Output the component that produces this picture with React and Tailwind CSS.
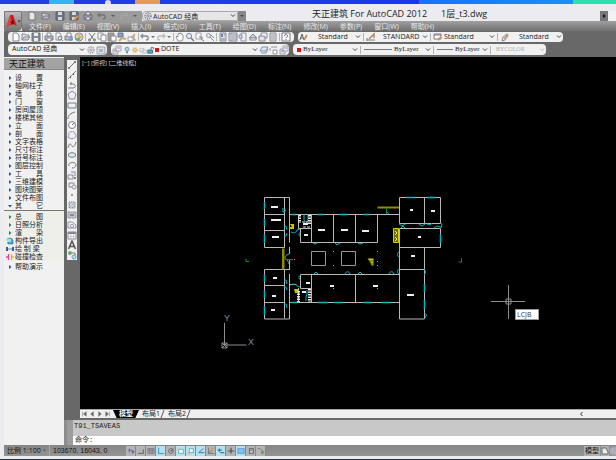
import { useState } from 'react'
import clsx from 'clsx'

const glyphs = {
  new: <path d="M2 1h4l2 2v6H2z" fill="#fff" stroke="#667" />,
  open: <><path d="M1 8V2h3l1 1h3v2" fill="#dde" stroke="#667" /><path d="M1 8l2-3h6L7 8z" fill="#bcc8d4" stroke="#667" /></>,
  save: <><path d="M1 1h8v8H1z" fill="#5b6a80" stroke="#445" /><path d="M3 1h4v3H3zM3 6h4v3H3z" fill="#e8edf2" /></>,
  saveas: <><path d="M1 1h8v8H1z" fill="#5b6a80" stroke="#445" /><path d="M3 1h4v3H3zM3 6h4v3H3z" fill="#e8edf2" /><path d="M5 9l4-4" stroke="#e8902c" strokeWidth="2" /></>,
  print: <><path d="M3 4V1h4v3" fill="#fff" stroke="#667" /><path d="M1 4h8v4H1z" fill="#aab" stroke="#556" /><path d="M3 6h4v3H3z" fill="#fff" stroke="#667" /></>,
  preview: <><path d="M2 1h4l1 2v5H2z" fill="#fff" stroke="#778" /><circle cx="6" cy="6" r="2" fill="#cfe0f0" stroke="#556" /><path d="M7 7l2 2" stroke="#556" /></>,
  plot: <><path d="M1 4h7v4H1z" fill="#aab" stroke="#556" /><path d="M3 4V1h4v3" fill="#fff" stroke="#667" /><circle cx="7" cy="7" r="2" fill="#4a86c8" /></>,
  globe: <><circle cx="5" cy="5" r="4" fill="#a9cfe6" stroke="#668" /><path d="M5 1v4h4" fill="none" stroke="#d9a52c" strokeWidth="2" /><path d="M2 7h4" stroke="#4a9a4a" strokeWidth="2" /></>,
  cut: <><path d="M2 1l5 7M8 1L3 8" stroke="#556" fill="none" /><circle cx="2.5" cy="8" r="1" fill="#fff" stroke="#335" /><circle cx="7.5" cy="8" r="1" fill="#fff" stroke="#335" /></>,
  copy: <><path d="M1 1h5v6H1z" fill="#fff" stroke="#778" /><path d="M4 3h5v6H4z" fill="#fff" stroke="#667" /></>,
  paste: <><path d="M1 1h6v8H1z" fill="#8d8268" stroke="#667" /><path d="M4 4h5v5H4z" fill="#fff" stroke="#667" /></>,
  match: <><path d="M1 1h5v4H1z" fill="#5c8fd0" stroke="#446" /><path d="M2 9l3-3 4 1" stroke="#d58b30" strokeWidth="2" fill="none" /></>,
  block: <><path d="M1 5h5v4H1z" fill="#fff" stroke="#778" /><path d="M4 6l4-4" stroke="#d58b30" strokeWidth="1.5" /><path d="M7 3v5h2" fill="none" stroke="#778" /></>,
  undo: <path d="M3 2L1 4l2 2M1 4h5c3 0 3 4 0 4" fill="none" stroke="#667" strokeWidth="1.3" />,
  redo: <path d="M7 2l2 2-2 2M9 4H4c-3 0-3 4 0 4" fill="none" stroke="#a5a8ac" strokeWidth="1.3" />,
  dot: <path d="M3 4h4L5 6z" fill="#444" />,
  hand: <path d="M3 9L1 5l1-1 1 1V2l1-1 1 1V1h1v1l1 0 1 1v4L7 9z" fill="#fff" stroke="#667" strokeWidth=".9" />,
  zoom: <><circle cx="4" cy="4" r="2.6" fill="#dbe8f4" stroke="#667" /><path d="M6 6l3 3" stroke="#556" strokeWidth="1.5" /></>,
  zoomwin: <><path d="M1 1h5v6H1z" fill="#fff" stroke="#889" /><path d="M4 5h3v2M6 7l3 2" stroke="#556" fill="none" /></>,
  zoomprev: <><circle cx="3.5" cy="3.5" r="2" fill="#dbe8f4" stroke="#778" /><path d="M5 5l4 4M6 3l3 3" stroke="#667" /></>,
  props: <><path d="M2 1h6v8H2z" fill="#d2dcea" stroke="#667" /><path d="M3 2h2v3H3z" fill="#3262a8" /><path d="M6 3h1M3 7h4" stroke="#556" /></>,
  design: <><path d="M1 1h8v8H1z" fill="#dde" stroke="#667" /><path d="M3 1v8M4 3h5M4 5h5M4 7h5" stroke="#667" strokeWidth=".8" /></>,
  palette: <><path d="M3 1h5v8H3z" fill="#eef" stroke="#778" /><path d="M1 3h3v3H1z" fill="#d6e2f0" stroke="#557" strokeWidth=".8" /></>,
  sheet: <><path d="M1 6l4-4 4 4z" fill="#bcc9d8" stroke="#667" /><path d="M2 6h6v2H2z" fill="#fff" stroke="#667" /></>,
  markup: <><path d="M3 1h6v5H3z" fill="#fff" stroke="#667" /><path d="M1 4h6v5H1z" fill="#d4dde8" stroke="#667" /></>,
  calc: <><path d="M2 1h6v8H2z" fill="#eee" stroke="#667" /><path d="M3 3h4M3 5h4M3 7h4" stroke="#667" strokeWidth=".9" /></>,
  help: <><path d="M1 1h8v8H1z" fill="#fff" stroke="#556" /><path d="M3.5 4c0-2 3-2 3 0 0 1-1.500 1-1.500 2M5 7v1" fill="none" stroke="#335" /></>,
  textstyle: <><path d="M1 8l2-6 2 6M2 6h2" stroke="#333" fill="none" /><path d="M5 8l3-5" stroke="#b5651d" strokeWidth="1.7" /></>,
  dimstyle: <><path d="M1 8h8M1 6v3" stroke="#555" /><path d="M3 7l5-5v4" stroke="#a9582a" strokeWidth="1.4" fill="none" /></>,
  tablestyle: <><path d="M1 2h7v5H1z" fill="#fff" stroke="#556" /><path d="M1 3h7" stroke="#556" /><path d="M5 8l3-3" stroke="#c27a2a" strokeWidth="2" /></>,
  leader: <><path d="M2 9l1-4 4-3 1 2-3 4z" fill="#eee" stroke="#667" /><path d="M4 7l4-5" stroke="#c27a2a" strokeWidth="1.4" /></>,
  gear: <><circle cx="5" cy="5" r="3" fill="#fff" stroke="#778" strokeWidth="1.4" strokeDasharray="1.4 .8" /><circle cx="5" cy="5" r="1.2" fill="none" stroke="#778" /></>,
  workspace: <><path d="M1 2h8v7H1z" fill="#d4dbe3" stroke="#889" /><path d="M3 4h4v3H3z" fill="#8fa3b8" /></>,
  layers: <><path d="M1 4h5v5H1z" fill="#ddd" stroke="#889" /><path d="M4 1h5v5H4z" fill="#eef" stroke="#889" /><path d="M2 6h3M5 3h3" stroke="#778" /></>,
  bulb: <><circle cx="5" cy="4" r="2.500" fill="#b4d4ee" stroke="#68a" /><path d="M4 8h2" stroke="#666" strokeWidth="2" /></>,
  sun: <><circle cx="5" cy="5" r="3.400" fill="none" stroke="#d9a52c" strokeDasharray="1 1.200" /><circle cx="5" cy="5" r="2" fill="#f4dc8a" stroke="#b98a22" strokeWidth=".7" /></>,
  freeze: <><path d="M1 3h5v4H1zM4 5h5v4H4z" fill="#eee" stroke="#bbb" /></>,
  lock: <><path d="M5 5V2h3v2" fill="none" stroke="#367" /><path d="M1 5h6v4H1z" fill="#5aa7cf" stroke="#367" /></>,
  layerprev: <><path d="M3 2h6L7 6H1z" fill="#d3e4f2" stroke="#579" /><path d="M2 8h5l2-4" fill="none" stroke="#579" /></>,
  layeriso: <><path d="M2 2h6M4 5h4v4H4z" fill="#fff" stroke="#778" /><path d="M1 3v3" stroke="#778" /></>,
  line: <><path d="M2 8l6-6" stroke="#444" /><path d="M1 8h2M7 2h2" stroke="#333" strokeWidth="1.5" /></>,
  xline: <><path d="M1 9l8-8" stroke="#666" /><path d="M3 7h1M6 4h1" stroke="#222" strokeWidth="2" /></>,
  pline: <path d="M1 8h5c3 0 3-4 0-4H3M4 2v3" stroke="#555" fill="none" />,
  polygon: <path d="M5 1l4 3-1.500 5h-5L1 4z" fill="#e8f0f6" stroke="#667" />,
  rect: <path d="M1 3h8v5H1z" fill="#e8f0f6" stroke="#556" />,
  arc: <path d="M1 9c0-4 3-6 7-7" fill="none" stroke="#444" />,
  circle: <><circle cx="5" cy="5" r="3.500" fill="#fff" stroke="#556" /><path d="M5 5l2-2" stroke="#444" /></>,
  cloud: <path d="M2 8c-2-2 0-3 0-3-1-2 1-4 2-3 2-1 4 0 4 2 2 1 1 4-1 4-2 1-3 1-5 0z" fill="#eef" stroke="#667" strokeDasharray="2 .5" />,
  spline: <path d="M1 8c1-6 3-4 4-2s3 0 4-4" fill="none" stroke="#555" />,
  ellipse: <ellipse cx="5" cy="5" rx="3.800" ry="2.300" fill="#dce8f0" stroke="#556" />,
  earc: <path d="M2 6C0 2 9 1 9 5c0 2-2 3-4 3" fill="none" stroke="#556" />,
  insert: <><path d="M1 5h5v4H1zM4 2h4v4" fill="#eef" stroke="#667" /><circle cx="8" cy="8" r="1" fill="#333" /></>,
  makeblock: <><path d="M2 3h5v4H2z" fill="#eef" stroke="#667" /><circle cx="7" cy="7" r="2" fill="#eee" stroke="#778" /></>,
  point: <path d="M4.500 4.500h1v1h-1z" fill="#333" stroke="#333" strokeWidth=".5" />,
  hatch: <path d="M2 2h6v6H2zM2 5l3-3M2 8l6-6M5 8l3-3" fill="#cdd5dc" stroke="#667" strokeWidth=".9" strokeDasharray="1.500 .5" />,
  gradient: <><path d="M1 2h8v6H1z" fill="#aebac6" stroke="#667" strokeDasharray="2 .7" /><path d="M3 4h4v2H3z" fill="#667" /></>,
  region: <><path d="M1 8V2h4l4 3v3z" fill="#eef" stroke="#778" /><circle cx="5" cy="6" r="1.600" fill="#fff" stroke="#778" /></>,
  table: <><path d="M1 2h8v7H1z" fill="#fff" stroke="#667" /><path d="M1 2h8v2H1z" fill="#667" /><path d="M4 4v5M6.500 4v5M1 6.500h8" stroke="#99a" strokeWidth=".6" /></>,
  text: <path d="M1.500 9L5 1l3.500 8M3 6.500h4" fill="none" stroke="#222" strokeWidth="1.500" />,
  addsel: <><circle cx="3" cy="3" r="2" fill="#3d9b46" /><path d="M5 3h3v3" fill="none" stroke="#555" /><circle cx="7" cy="7" r="2" fill="#aad8f2" stroke="#3f86b5" /></>,
  infer: <path d="M3 2v5M1 4h5M6 4l3 2-2 2z" fill="#3a78b5" stroke="#234f83" />,
  snap: <path d="M2 8h6V3M3 8h1" fill="none" stroke="#333" />,
  gridd: <path d="M1 2h8v6H1zM3 2v6M5 2v6M7 2v6M1 4h8" fill="#aaa" stroke="#556" strokeWidth=".7" />,
  ortho: <path d="M2 1v7h7" fill="none" stroke="#2582b3" strokeWidth="1.300" />,
  polar: <><circle cx="5" cy="5" r="3" fill="#bbb" stroke="#444" /><path d="M5 5l3-3M4 5h3" stroke="#333" /></>,
  osnap: <><path d="M2 3h6v5H2z" fill="#fff" stroke="#368bb5" /><path d="M1 2h2v2H1z" fill="#e69a45" /></>,
  osnap3d: <><path d="M3 2h5v5H3zM3 7L1 9" fill="#fff" stroke="#368bb5" /><path d="M1 7h2v2H1z" fill="#e69a45" /></>,
  otrack: <path d="M8 2L2 7h7" fill="none" stroke="#175b83" strokeWidth="1.200" />,
  ducs: <><path d="M2 1v7h7M2 8l4-4" fill="none" stroke="#555" /><path d="M6 4l2-3" stroke="#e8902c" strokeWidth="2" /></>,
  dyn: <path d="M3 2v4M1 4h5M4 7h5" stroke="#165a7c" strokeWidth="1.600" />,
  lwt: <path d="M5 1v7M1 5h8" stroke="#333" strokeWidth="1.500" />,
  tpy: <path d="M1 2h8v6H1z" fill="#72b7ec" stroke="#3380c1" />,
  qp: <><path d="M3 2h5v6H3z" fill="#ccc" stroke="#333" /><path d="M4 4h3" stroke="#333" /></>,
  sc: <><path d="M1 2h3l3 3" stroke="#555" fill="none" /><circle cx="7" cy="7" r="2.200" fill="#4fa53f" /></>,
  layout: <path d="M2 2h4l2 4v2H2z" fill="#fff" stroke="#555" />,
}

function Icon({ name, className = 'size-[10px]' }) {
  return (
    <svg viewBox="0 0 10 10" fill="none" aria-hidden="true" className={clsx('shrink-0', className)}>
      {glyphs[name]}
    </svg>
  )
}

function IconButton({ name, className }) {
  return (
    <button type="button" aria-label={name} className={clsx('flex shrink-0 items-center justify-center', className)}>
      <Icon name={name} className="size-[10px] opacity-75" />
    </button>
  )
}

function Sep() {
  return <span className="mx-px h-2 w-px shrink-0 bg-[#b4b4b4]" />
}

function Picker({ label, value, disabled, className, textClass }) {
  return (
    <span className={clsx('relative flex h-full shrink-0 items-center', className)}>
      <select
        aria-label={label}
        disabled={disabled}
        className={clsx('h-full w-full appearance-none bg-transparent outline-none', disabled ? 'text-[#aaa]' : 'text-[#222]', textClass)}
      >
        <option>{value}</option>
      </select>
      <svg viewBox="0 0 6 4" fill="none" className="pointer-events-none absolute right-px h-1 w-1.5" aria-hidden="true">
        <path d="M1 .5l2 2 2-2" stroke={disabled ? '#bbb' : '#444'} />
      </svg>
    </span>
  )
}

const menus = ['文件(F)', '编辑(E)', '视图(V)', '插入(I)', '格式(O)', '工具(T)', '绘图(D)', '标注(N)', '修改(M)', '参数(P)', '窗口(W)', '帮助(H)']

const standardTools = [
  ['new', 'open', 'save'],
  ['print', 'preview', 'plot', 'globe'],
  ['cut', 'copy', 'paste', 'match', 'block'],
  ['undo', 'dot', 'redo', 'dot'],
  ['hand', 'zoom', 'zoomwin', 'zoomprev'],
  ['props', 'design', 'palette', 'sheet', 'markup', 'calc'],
  ['help'],
]

const drawTools = ['line', 'xline', 'pline', 'polygon', 'rect', 'arc', 'circle', 'cloud', 'spline', 'ellipse', 'earc', 'insert', 'makeblock', 'point', 'hatch', 'gradient', 'region', 'table', 'text', 'addsel']

const sideItems = ['设　　置', '轴网柱子', '墙　　体', '门　　窗', '房间屋顶', '楼梯其他', '立　　面', '剖　　面', '文字表格', '尺寸标注', '符号标注', '图层控制', '工　　具', '三维建模', '图块图案', '文件布图']

const statusToggles = [
  ['infer', false], ['snap', false], ['gridd', false], ['ortho', true], ['polar', false], ['osnap', true], ['osnap3d', true],
  ['otrack', true], ['ducs', false], ['dyn', true], ['lwt', false], ['tpy', true], ['qp', false], ['sc', false],
]

function DesktopStrip() {
  return (
    <div className="flex h-1 shrink-0 bg-gradient-to-r from-[#2440e4] to-[#1034f0]">
      <span className="w-[8%]" />
      <span className="w-[4%] bg-[#35b4f4]" />
      <span className="w-[5%]" />
      <span className="w-[1%] rounded-t-full bg-[#e4d4ee]" />
      <span className="w-[4%]" />
      <span className="w-[4%] bg-[#e29a55]" />
      <span className="w-[42%]" />
      <span className="w-[25%] bg-gradient-to-r from-[#1672fa] to-[#1a90f8]" />
      <span className="flex-1 bg-[#2ce0b0]" />
    </div>
  )
}

function TitleBar() {
  return (
    <div className="flex h-[10px] items-center">
      <div className="flex h-full items-center gap-[2px] bg-[#9b9b9b] px-1">
        <IconButton name="new" className="w-3" />
        <IconButton name="open" className="w-3" />
        <IconButton name="save" className="w-3" />
        <IconButton name="saveas" className="w-3" />
        <IconButton name="print" className="w-3" />
        <IconButton name="undo" className="w-3" />
        <IconButton name="dot" className="w-1.5" />
        <IconButton name="redo" className="w-3" />
        <IconButton name="dot" className="w-1.5" />
      </div>
      <div className="flex h-full w-24 shrink-0 items-center rounded-l-sm border border-[#aaa] bg-[#e6e6e6]">
        <Icon name="gear" />
        <Picker label="工作空间" value="AutoCAD 经典" className="flex-1" textClass="text-[7px]" />
      </div>
      <button type="button" aria-label="自定义" className="flex h-full w-2 shrink-0 items-center justify-center bg-[#888]">
        <Icon name="dot" />
      </button>
      <h1 className="flex-1 self-start pl-[66px] text-[9px] leading-[6px] whitespace-pre text-[#222]">{'天正建筑 For AutoCAD 2012      1层_t3.dwg'}</h1>
      <div className="flex h-full w-4 shrink-0 items-center bg-[#777] text-[#222]">
        <svg viewBox="0 0 8 10" className="h-[10px] w-2" aria-hidden="true"><path d="M3 3l3 2-3 2z" fill="#111" /></svg>
        <input aria-label="搜索" className="h-[10px] min-w-0 flex-1 bg-[#f2f2f2]" />
      </div>
    </div>
  )
}

function Toolbars() {
  return (
    <div className="flex flex-col gap-0.5 bg-[#686868] pt-px pb-0.5 pl-1">
      <div className="flex h-[10px] gap-1">
        <div className="flex items-center rounded-sm bg-[#f1f1f1] px-[3px]">
          {standardTools.map((group, i) => (
            <div key={i} className="flex items-center">
              {i > 0 && <Sep />}
              {group.map((name, j) => (
                <IconButton key={j} name={name} className={name === 'dot' ? 'w-1.5' : 'w-[10px]'} />
              ))}
            </div>
          ))}
        </div>
        <div className="flex items-center rounded-sm bg-[#f1f1f1]">
          <IconButton name="textstyle" className="w-3" />
          <Picker label="文字样式" value="Standard" className="w-[52px]" textClass="pl-2 text-[7px]" />
          <Sep />
          <IconButton name="dimstyle" className="w-3" />
          <Picker label="标注样式" value="STANDARD" className="w-[52px]" textClass="pl-1.5 text-[7px]" />
          <Sep />
          <IconButton name="tablestyle" className="w-3" />
          <Picker label="表格样式" value="Standard" className="w-[52px]" textClass="text-[7px]" />
          <Sep />
          <IconButton name="leader" className="w-3" />
          <Picker label="多重引线样式" value="Standard" className="w-[52px]" textClass="pl-2 text-[7px]" />
        </div>
      </div>
      <div className="flex h-[11px] gap-1">
        <div className="flex w-[99px] items-center rounded-sm bg-[#f1f1f1]">
          <Picker label="当前工作空间" value="AutoCAD 经典" className="w-[78px]" textClass="pl-1 text-[7px]" />
          <IconButton name="gear" />
          <IconButton name="workspace" />
        </div>
        <div className="flex w-[178px] items-center rounded-sm bg-[#f1f1f1]">
          <IconButton name="layers" className="w-3" />
          <Icon name="bulb" className="size-2" />
          <Icon name="sun" className="size-2" />
          <Icon name="freeze" className="size-2" />
          <Icon name="lock" className="size-2" />
          <span className="size-1 bg-[#d81414]" />
          <Picker label="图层" value="DOTE" className="flex-1" textClass="pl-0.5 text-[7px]" />
          <IconButton name="layerprev" />
          <IconButton name="layeriso" />
          <IconButton name="layers" />
        </div>
        <div className="flex items-center rounded-sm bg-[#f1f1f1] pl-1 font-['Liberation_Serif','Noto_Sans_CJK_SC',serif]">
          <span className="size-1 bg-[#d81414]" />
          <Picker label="颜色" value="ByLayer" className="w-[58px]" textClass="pl-0.5 text-[7px]" />
          <Sep />
          <span className="ml-0.5 h-px w-7 bg-[#777]" />
          <Picker label="线型" value="ByLayer" className="w-10" textClass="pl-0.5 text-[7px]" />
          <Sep />
          <span className="ml-0.5 h-px w-4 bg-[#777]" />
          <Picker label="线宽" value="ByLayer" className="w-9" textClass="pl-0.5 text-[7px]" />
          <Sep />
          <Picker label="打印样式" value="BYCOLOR" disabled className="w-[54px]" textClass="pl-1 text-[6px]" />
        </div>
      </div>
    </div>
  )
}

function SideRow({ children, icon, color = 'text-[#1c5a96]' }) {
  return (
    <li>
      <button type="button" className="flex h-2 items-center text-[7px] leading-[8px] whitespace-pre text-[#222]">
        <span className={clsx('flex w-[11px] justify-center', color)}>
          {icon || <svg viewBox="0 0 4 4" className="size-1" aria-hidden="true"><path d="M1 0l2.500 2L1 4z" fill="currentColor" /></svg>}
        </span>
        {children}
      </button>
    </li>
  )
}

function SidePanel() {
  return (
    <aside className="w-[60px] shrink-0 bg-[#f1f1f1]">
      <h2 className="mt-px h-3 border-b border-[#888] bg-[#a3a3a3] pl-[5px] text-[9px] leading-[12px] text-[#111]">天正建筑</h2>
      <ul className="pt-1">
        {sideItems.map((item) => (
          <SideRow key={item}>{item}</SideRow>
        ))}
        <SideRow icon={<svg viewBox="0 0 4 4" className="size-1" aria-hidden="true"><path d="M0 1h4L2 3.500z" fill="currentColor" /></svg>}>其　　它</SideRow>
      </ul>
      <ul className="border-t border-[#777] bg-[#efefea] pt-0.5">
        <SideRow color="text-[#128080]">总　　图</SideRow>
        <SideRow color="text-[#128080]">日照分析</SideRow>
        <SideRow color="text-[#128080]">渲　　染</SideRow>
        <SideRow icon={<svg viewBox="0 0 8 8" className="size-2"><path d="M1 2l4-1 2 2v4H2z" fill="#48a7d8" stroke="#2377a8" strokeWidth=".6" /><path d="M1 2h4v3H1z" fill="#a7dcf3" /></svg>}>构件导出</SideRow>
        <SideRow icon={<svg viewBox="0 0 8 8" className="size-2"><path d="M0 2h2v4H0zM6 2h2v4H6z" fill="#345f90" /><path d="M2 3h4v2H2z" fill="#a8bdd2" /></svg>}>绘 制 梁</SideRow>
        <SideRow icon={<svg viewBox="0 0 8 8" className="size-2"><path d="M2.500 1v6M0 4h3" stroke="#e044a6" strokeWidth="1.300" /><path d="M5.500 1v6M5 4h3" stroke="#e5b32b" strokeWidth="1.300" /></svg>}>碰撞检查</SideRow>
      </ul>
      <ul className="pt-0.5">
        <SideRow>帮助演示</SideRow>
      </ul>
    </aside>
  )
}

// room name blobs: x, y, width
const roomMarks = [
  [271, 206, 7], [271, 219, 10], [272, 236, 7], [273, 277, 4], [272, 295, 4], [271, 309, 4],
  [318, 229, 7], [341, 229, 7], [362, 230, 7], [304, 234, 4], [303, 223, 5], [306, 282, 4], [302, 291, 4],
  [330, 285, 4], [373, 285, 5], [410, 209, 3], [431, 210, 4], [418, 236, 3], [411, 255, 4], [407, 294, 7],
]

// wall openings drawn over the walls: x1, y1, x2, y2
const windows = [
  [264.500, 202, 264.500, 209], [264.500, 219, 264.500, 226], [264.500, 234, 264.500, 243],
  [264.500, 274, 264.500, 282], [264.500, 290, 264.500, 298], [264.500, 306, 264.500, 315],
  [291, 214.500, 296, 214.500], [318, 214.500, 324, 214.500], [339, 214.500, 348, 214.500], [363, 214.500, 369, 214.500],
  [291, 302.500, 297, 302.500], [318, 302.500, 328, 302.500], [334, 302.500, 343, 302.500], [363, 302.500, 372, 302.500], [382, 302.500, 391, 302.500],
  [406, 197.500, 415, 197.500], [427, 197.500, 436, 197.500], [440.500, 234, 440.500, 243], [424.500, 284, 424.500, 292], [424.500, 300, 424.500, 309],
]

// door swings, each starting on its wall
const doors = [
  'M283 208v4h2v-3', 'M284 226h2l1 4', 'M284 236h2l1-3', 'M284 280h2l1 4', 'M284 287h2l1 3', 'M284 304h2l1 4',
  'M291 232c3 2 6 0 6-2l3-1', 'M291 285c3-2 5 0 6 1l3 1', 'M300.500 232c-2 1-2 3 0 5', 'M300.500 275c-2 1-2 3 0 5',
  'M313 243l2 1 2-1', 'M335 243l2 2 3-2', 'M358 243l2 1 3-1', 'M314 274l2-2 2 2', 'M345 274c1-3 4-3 5 0', 'M358 274l2-2 2 2', 'M389 274c1-3 4-3 5 0',
  'M386 214c1-2 2-2 3 0', 'M399 224l3 2 3-2', 'M401 228l2-2 2 2', 'M419 224l3 2 3-2', 'M427 224l3 1 2-2', 'M434 228l3-2 4 1', 'M440 223l2 1-1 4',
  'M399 252c-2 1-2 4 0 5', 'M399 269c-2 1-2 4 0 5', 'M424.500 269l1 3-1 3', 'M424.500 313l2 2-2 4',
  'M289 254c-4 1-5 4-3 5 2 1 2 3 3 5', 'M304 214v5c0 4 4 4 4 0v-5', 'M307 290v4l-1 3v4',
]

function FloorPlan() {
  return (
    <svg className="block h-full w-full" aria-hidden="true">
      {/* plan units start at the window corner, so shift by the panel sizes */}
      <g transform="translate(-80 -57)" fill="none">
        <g stroke="#b9b9b9">
          <path d="M264.500 197.500h25v45M264.500 197.500v50h20M284.500 197.500v50M264.500 214.500h20M264.500 230.500h20M289.500 247v7" />
          <path d="M264.500 269.500h25M264.500 269.500v49.500h25v-45M284.500 269.500v49M264.500 285.500h20M264.500 302.500h20M289.500 259v11" />
          <path d="M289.500 214.500h110M300.500 242.500h77v-28M311.500 214.500v28M333.500 214.500v28M355.500 214.500v28M300.500 228.500v14M298.500 214.500v14h13" />
          <path d="M300.500 274.500h99M289.500 302.500h110M311.500 274.500v28M355.500 274.500v28M300.500 274.500v14h11M298.500 288v14M289.500 284.500h7" />
          <path d="M399.500 197.500h41v26h-41zM424.500 197.500v26M399.500 228.500h41v19h-41M399.500 228.500v90.500h25V247.500M399.500 269.500h25" />
          <path d="M311.500 251.500h14v14h-14zM341.500 251.500h14v14h-14z" stroke="#999" />
        </g>
        <g fill="#aaa">
          {[[333, 251], [333, 265], [377, 251], [377, 265], [377, 288], [333, 288], [377, 261], [294, 259]].map(([x, y]) => (
            <rect key={`${x}-${y}`} x={x} y={y} width="1" height="1" />
          ))}
        </g>
        <g stroke="#00bcc4">
          {windows.map(([x1, y1, x2, y2]) => (
            <path key={`${x1}-${y1}`} d={`M${x1} ${y1}L${x2} ${y2}`} strokeWidth="1.500" />
          ))}
          {doors.map((d) => (
            <path key={d} d={d} />
          ))}
        </g>
        <g stroke="#e8e8e8" strokeWidth="3" strokeDasharray="1.500 1">
          <path d="M299.500 215v8M309.500 215v9M309.500 289v13M298.500 291v11" />
        </g>
        <path d="M302 222h6M303 227h8" stroke="#ddd" strokeDasharray="3 1" />
        <path d="M282 248.500h2.500v21H282zM377.500 206.500H399v2h-21.500z" fill="#8f8c00" />
        <path d="M393.500 228.500h5v14h-5z" fill="#706e00" stroke="#d2d000" />
        <path d="M395 231l2 2-2 2M395 237l2 2-2 2" stroke="#e6e6a0" />
        <path d="M290 224h4v5h-4v-2h2zM294 289h4v4h-3zM367.500 258.500h6v7h-2l-1-3z" fill="#c9c600" />
        <path d="M369 261h4M371 264h3" stroke="#553" />
        <path d="M285 259.500h8M386.500 208v5M461.500 258v4h-3M246 258.500v3h3" stroke="#178a24" />
        <g fill="#eee">
          {roomMarks.map(([x, y, w]) => (
            <rect key={`${x}-${y}`} x={x} y={y} width={w} height="2" />
          ))}
        </g>
        <g stroke="#8c8c8c">
          <path d="M224.500 323v22h22M222 343h5v5h-5zM222 343l5 5M227 343l-5 5" />
          <path d="M491 301.500h34M508.500 285v34M506 299h5v5h-5z" />
        </g>
        <g fill="#8c8c8c" fontFamily="'Liberation Sans', sans-serif" fontSize="9">
          <text x="224" y="321">Y</text>
          <text x="248" y="345">X</text>
        </g>
      </g>
    </svg>
  )
}

function LayoutTabs() {
  const tabs = ['布局1', '布局2']
  return (
    <div className="flex shrink-0 bg-[#686868] pl-4">
      <div className="flex h-[9px] flex-1 items-center border-t border-[#aaa] bg-[#efefef] text-[7px] leading-[8px] text-[#222]">
        {['M3 2v5M7 2L4 4.500 7 7z', 'M6 2L3 4.500 6 7z', 'M3 2l3 2.500L3 7z', 'M6 2v5M2 2l3 2.500L2 7z'].map((d, i) => (
          <button key={d} type="button" aria-label={['首个', '上一个', '下一个', '末个'][i]} className="h-2 w-2">
            <svg viewBox="0 0 9 9" className="size-2"><path d={d} fill="#666" stroke="#666" strokeWidth=".6" /></svg>
          </button>
        ))}
        <button type="button" className="ml-px h-full bg-black px-1.5 font-bold text-white [clip-path:polygon(0_0,100%_0,86%_100%,14%_100%)]">模型</button>
        {tabs.map((tab) => (
          <div key={tab} className="flex items-center">
            <button type="button" className="pl-[3px]">{tab}</button>
            <svg viewBox="0 0 5 8" className="h-2 w-[5px]" aria-hidden="true"><path d="M1 8l3-8" stroke="#555" /></svg>
          </div>
        ))}
        <span className="flex-1" />
        <button type="button" aria-label="向左滚动" className="mr-8 h-2">
          <svg viewBox="0 0 5 8" className="h-2 w-[5px]" fill="none"><path d="M3.500 2L1.500 4l2 2" stroke="#333" /></svg>
        </button>
      </div>
    </div>
  )
}

function CommandLine() {
  const [command, setCommand] = useState('')
  return (
    <div className="flex h-[27px] shrink-0 border-t-2 border-[#686868] bg-[#8c8c8c] font-['Liberation_Mono','Noto_Sans_CJK_SC',monospace] text-[7px] text-[#222]">
      <span className="ml-[3px] w-1.5 shrink-0 bg-[#9c9c9c]" />
      <div className="flex flex-1 flex-col bg-[#c8c8c8]">
        <p className="flex-1 pl-px leading-[12px]">T91_TSAVEAS</p>
        <div className="flex h-[9px] items-center bg-white pl-0.5 leading-[9px]">
          <label htmlFor="command">命令:</label>
          <input id="command" value={command} onChange={(e) => setCommand(e.target.value)} className="h-full flex-1 outline-none" />
        </div>
      </div>
    </div>
  )
}

function StatusBar() {
  return (
    <footer className="flex h-[11px] shrink-0 items-center bg-gradient-to-b from-[#858585] to-[#959595] text-[7px] leading-[10px] text-[#111]">
      <button type="button" className="flex h-full w-[46px] items-center border-r border-[#aaa] pl-[3px] whitespace-nowrap">
        比例 1:100
        <Icon name="dot" className="size-[7px]" />
      </button>
      <span className="w-[76px] pl-[3px] font-['Liberation_Sans',sans-serif] whitespace-nowrap">103670, 16043, 0</span>
      {statusToggles.map(([name, on]) => (
        <button
          key={name}
          type="button"
          aria-label={name}
          aria-pressed={on}
          className={clsx('flex h-[10px] w-[10px] shrink-0 items-center justify-center border-r border-[#888]', on ? 'bg-[#b5e0ee]' : 'bg-[#b4b4b4]')}
        >
          <Icon name={name} className="size-2 opacity-75" />
        </button>
      ))}
      <span className="flex-1" />
      <button type="button" className="h-[10px] shrink-0 bg-[#b0b0b0] px-px">模型</button>
      <IconButton name="layout" className="ml-px h-[10px] w-2 bg-[#b0b0b0]" />
      <IconButton name="design" className="ml-px h-[10px] w-1.5 overflow-hidden bg-[#b0b0b0]" />
    </footer>
  )
}

export default function App() {
  return (
    <div className="flex min-h-screen flex-col overflow-hidden bg-[#ececf0] font-['Open_Sans','Noto_Sans_CJK_SC',sans-serif]">
      <DesktopStrip />
      <div className="flex flex-1 flex-col border-b border-[#29344a] pb-[3px] pl-1">
        <header>
          <div className="flex pt-[7px]">
            <button type="button" aria-label="应用程序菜单" className="flex w-[18px] shrink-0 items-center justify-center rounded-br-sm border border-[#777] bg-gradient-to-b from-[#bbb] to-[#777]">
              <svg viewBox="0 0 16 18" className="h-[17px] w-4" aria-hidden="true">
                <path d="M1 15L5 2h3l4 12-3-2-4 1z" fill="#c4171e" />
                <path d="M5 2l2 7-2 4-4 2z" fill="#ec3f3a" />
                <path d="M5 10l3-3 1 5-2-1z" fill="#6f090e" />
                <path d="M13 8h3l-1.500 2z" fill="#333" />
              </svg>
            </button>
            <div className="flex min-w-0 flex-1 flex-col">
              <TitleBar />
              <nav className="flex h-[10px] items-center gap-3 bg-gradient-to-b from-[#a0a0a0] to-[#707070] pt-px pl-[7px] text-[7px] leading-[10px] whitespace-nowrap text-[#e8e8e8]">
                {menus.map((menu) => (
                  <button key={menu} type="button">{menu}</button>
                ))}
              </nav>
            </div>
          </div>
          <Toolbars />
        </header>
        <div className="flex flex-1">
          <SidePanel />
          <div className="flex min-w-0 flex-1 flex-col">
            <div className="flex flex-1 bg-[#686868]">
              <div className="w-4 shrink-0 pt-[3px] pl-[3px]">
                <div className="flex w-[10px] flex-col bg-[#f0f0f0]">
                  {drawTools.map((name) => (
                    <IconButton key={name} name={name} className="h-[10px] w-[10px]" />
                  ))}
                </div>
              </div>
              <main className="relative flex-1 bg-black">
                <div className="absolute inset-0 overflow-hidden">
                  <FloorPlan />
                </div>
                <p className="absolute top-0.5 left-0.5 text-[6px] leading-[8px] text-[#ccc]">[−] [俯视] [二维线框]</p>
                <input
                  aria-label="动态输入"
                  defaultValue="LCJB"
                  className="absolute top-[252px] left-[435px] h-[11px] w-6 border border-[#999] bg-white pl-px text-[7px] leading-[9px] text-[#333] outline-none"
                />
              </main>
            </div>
            <LayoutTabs />
            <CommandLine />
          </div>
        </div>
        <StatusBar />
      </div>
    </div>
  )
}
